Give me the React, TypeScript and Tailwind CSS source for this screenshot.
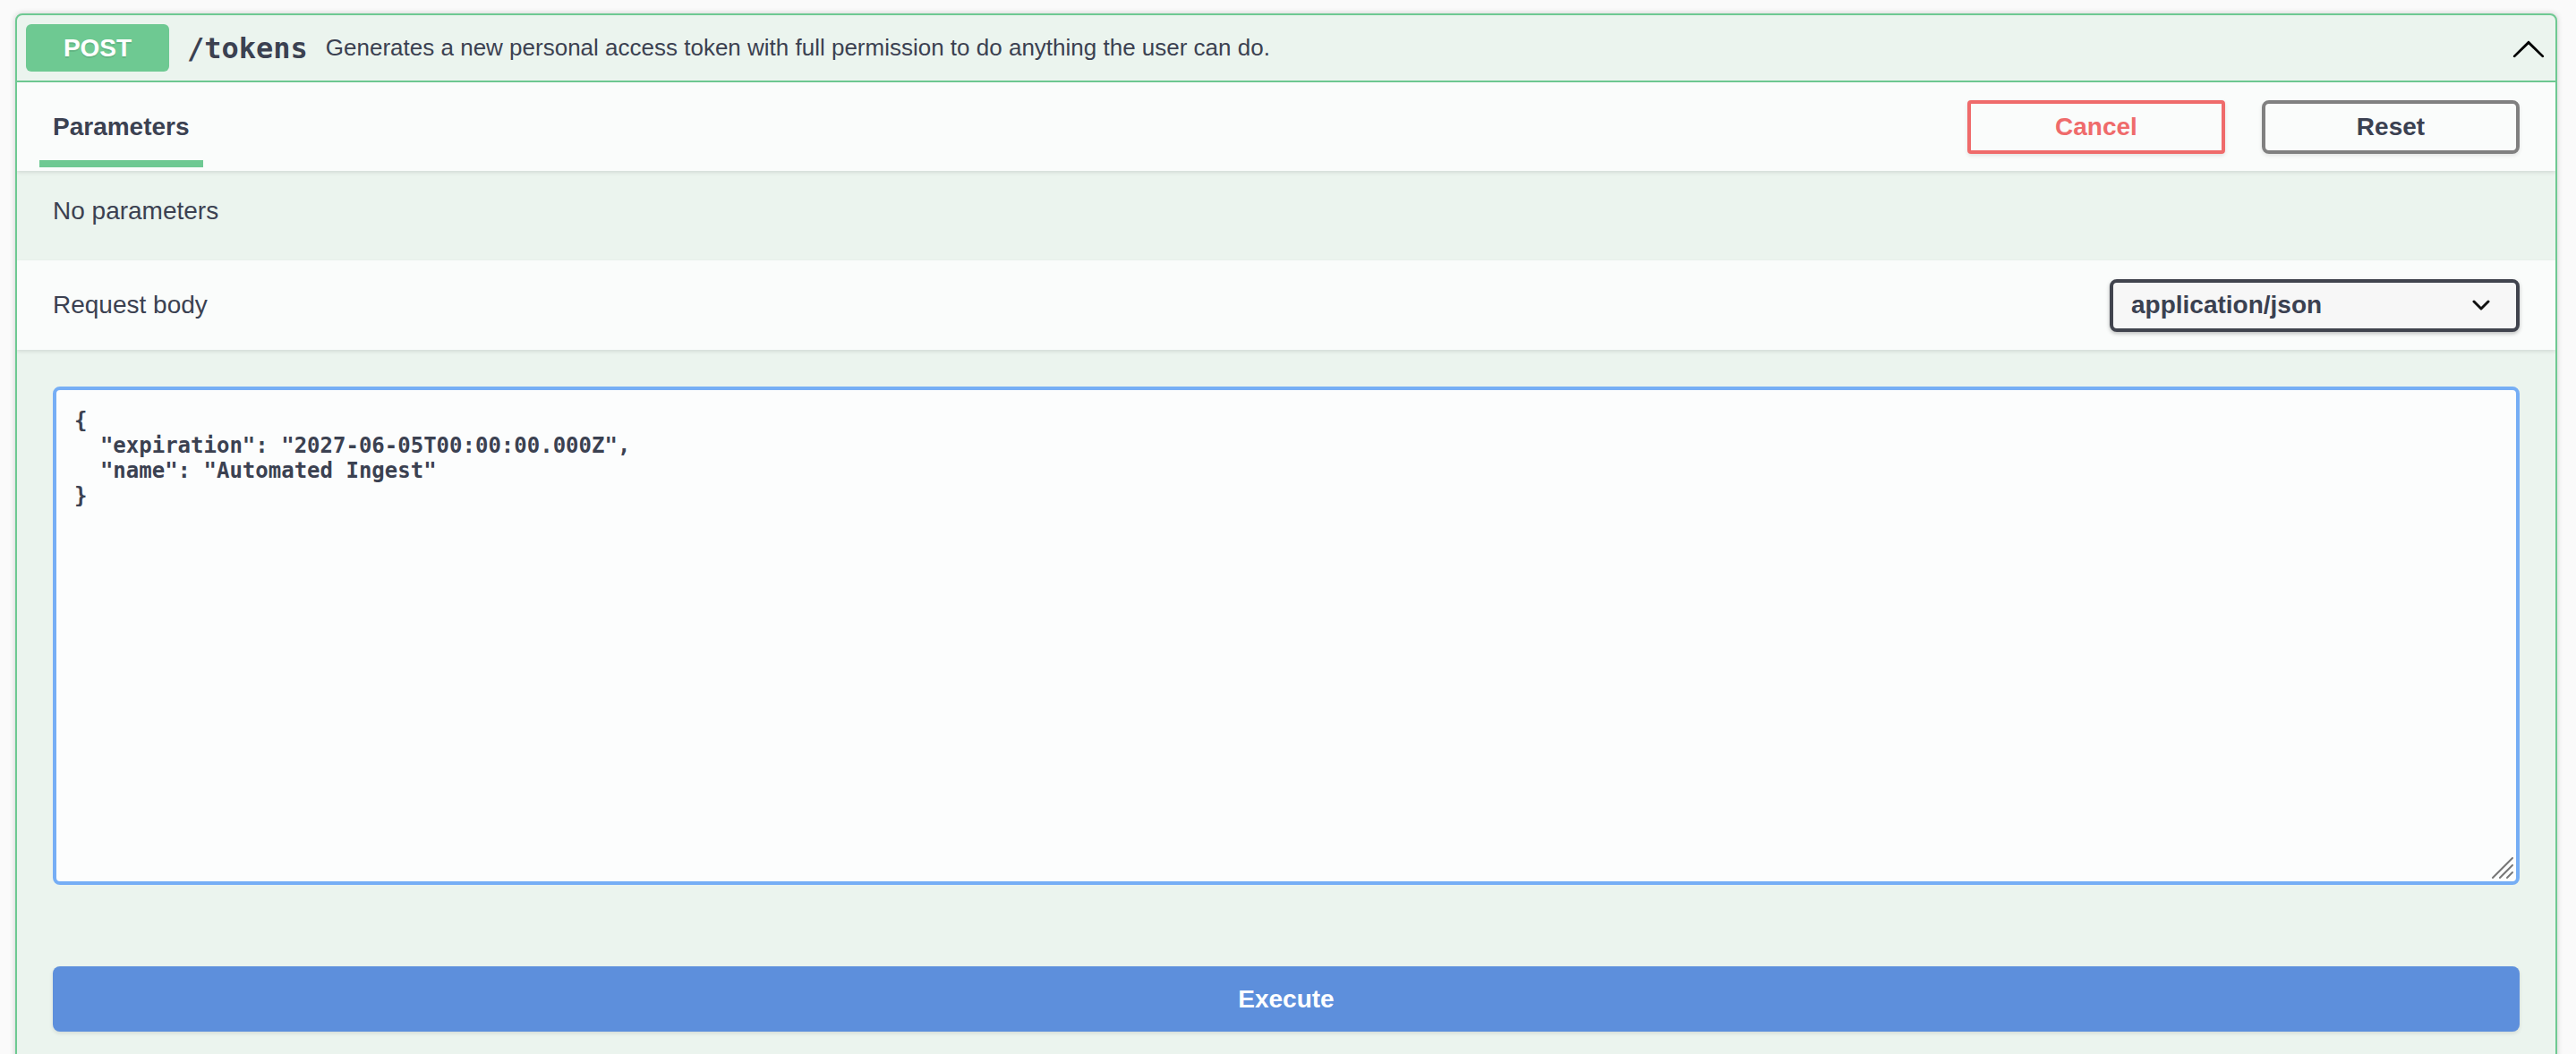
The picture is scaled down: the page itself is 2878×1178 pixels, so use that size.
import React from "react";

const sans = "font-['Liberation_Sans',Arial,Helvetica,sans-serif]";
const mono = "font-['DejaVu_Sans_Mono',Menlo,monospace]";

const body = `{
  "expiration": "2027-06-05T00:00:00.000Z",
  "name": "Automated Ingest"
}`;

const ArrowUp = () => (
	<svg width="40" height="40" viewBox="0 0 20 20" className="shrink-0">
		<path
			fill="#000"
			d="M17.418 14.908c.272.268.709.268.979 0 .27-.268.271-.701 0-.969l-7.908-7.83c-.27-.268-.707-.268-.979 0l-7.908 7.83c-.27.268-.27.701 0 .969.271.268.709.268.979 0L10 7.767l7.418 7.141z"
		/>
	</svg>
);

const Chevron = () => (
	<svg width="20" height="12" viewBox="0 0 20 12" fill="none">
		<polyline points="2,2 10,10 18,2" stroke="#111" strokeWidth="3" strokeLinecap="round" strokeLinejoin="round" />
	</svg>
);

// the little resize grip in the corner of the body textarea
const Grip = () => (
	<svg width="26" height="26" viewBox="0 0 26 26" className="pointer-events-none absolute bottom-[6px] right-[6px]">
		<g stroke="#777" strokeWidth="2" strokeLinecap="round">
			<line x1="2" y1="24" x2="24" y2="2" />
			<line x1="10" y1="24" x2="24" y2="10" />
			<line x1="18" y1="24" x2="24" y2="18" />
		</g>
	</svg>
);

export default function App() {
	return (
		<div className={`min-h-screen bg-[#fafafa] pl-[17px] pr-[21px] pt-[15px] text-[#3b4151] ${sans}`}>
			<div className="rounded-[8px] border-2 border-[#6ec992] bg-[#ebf4ee] shadow-[0_0_6px_rgba(0,0,0,0.19)] overflow-hidden">
				{/* summary */}
				<div className="flex items-center p-[10px] border-b-2 border-[#6ec992]">
					<div className="flex h-[53px] w-[160px] items-center justify-center rounded-[6px] bg-[#6ec992] text-[28px] font-bold text-white [text-shadow:0_2px_0_rgba(0,0,0,0.1)]">
						POST
					</div>
					<span className={`px-[20px] text-[32px] font-bold ${mono}`}>/tokens</span>
					<span className="flex-1 text-[26px]">
						Generates a new personal access token with full permission to do anything the user can do.
					</span>
					<ArrowUp />
				</div>

				{/* parameters header */}
				<div className="relative z-10 flex h-[99px] items-center justify-between bg-[#fafcfb] px-[40px] shadow-[0_2px_4px_rgba(0,0,0,0.1)]">
					<span className="relative text-[28px] font-bold leading-[32px]">
						Parameters
						<span className="absolute -bottom-[29px] left-[-10%] h-[8px] w-[120%] bg-[#6ec992]" />
					</span>
					<div className="flex gap-[41px]">
						<button className="h-[60px] w-[288px] rounded-[4px] border-[4px] border-[#ef6b6b] bg-transparent text-[28px] font-bold text-[#ef6b6b] shadow-[0_2px_4px_rgba(0,0,0,0.1)]">
							Cancel
						</button>
						<button className="h-[60px] w-[288px] rounded-[8px] border-[4px] border-[#808080] bg-transparent text-[28px] font-bold text-[#3b4151] shadow-[0_2px_4px_rgba(0,0,0,0.1)]">
							Reset
						</button>
					</div>
				</div>

				<div className="h-[100px] px-[40px] pt-[29px] text-[28px] leading-[32px]">No parameters</div>

				{/* request body header */}
				<div className="relative z-10 flex h-[100px] items-center justify-between bg-[#fafcfb] px-[40px] shadow-[0_2px_4px_rgba(0,0,0,0.1)]">
					<span className="text-[28px]">Request body</span>
					<div className="flex h-[59px] w-[458px] items-center justify-between rounded-[8px] border-[4px] border-[#41444e] bg-[#f7f7f7] pl-[20px] pr-[29px] text-[28px] font-bold shadow-[0_2px_4px_rgba(0,0,0,0.25)]">
						<span>application/json</span>
						<Chevron />
					</div>
				</div>

				{/* body */}
				<div className="px-[40px] pt-[41px] pb-[40px]">
					<div className="relative">
						<textarea
							readOnly
							value={body}
							className={`block h-[557px] w-full resize-none rounded-[8px] border-[4px] border-[#76aef5] bg-[#fcfdfd] p-[20px] text-[24px] font-bold leading-[28px] text-[#3b4151] outline-none ${mono}`}
						/>
						<Grip />
					</div>
					<button className="mt-[91px] h-[73px] w-full rounded-[8px] bg-[#5d8fdc] text-[28px] font-bold text-white shadow-[0_2px_4px_rgba(0,0,0,0.1)]">
						Execute
					</button>
				</div>
			</div>
		</div>
	);
}
